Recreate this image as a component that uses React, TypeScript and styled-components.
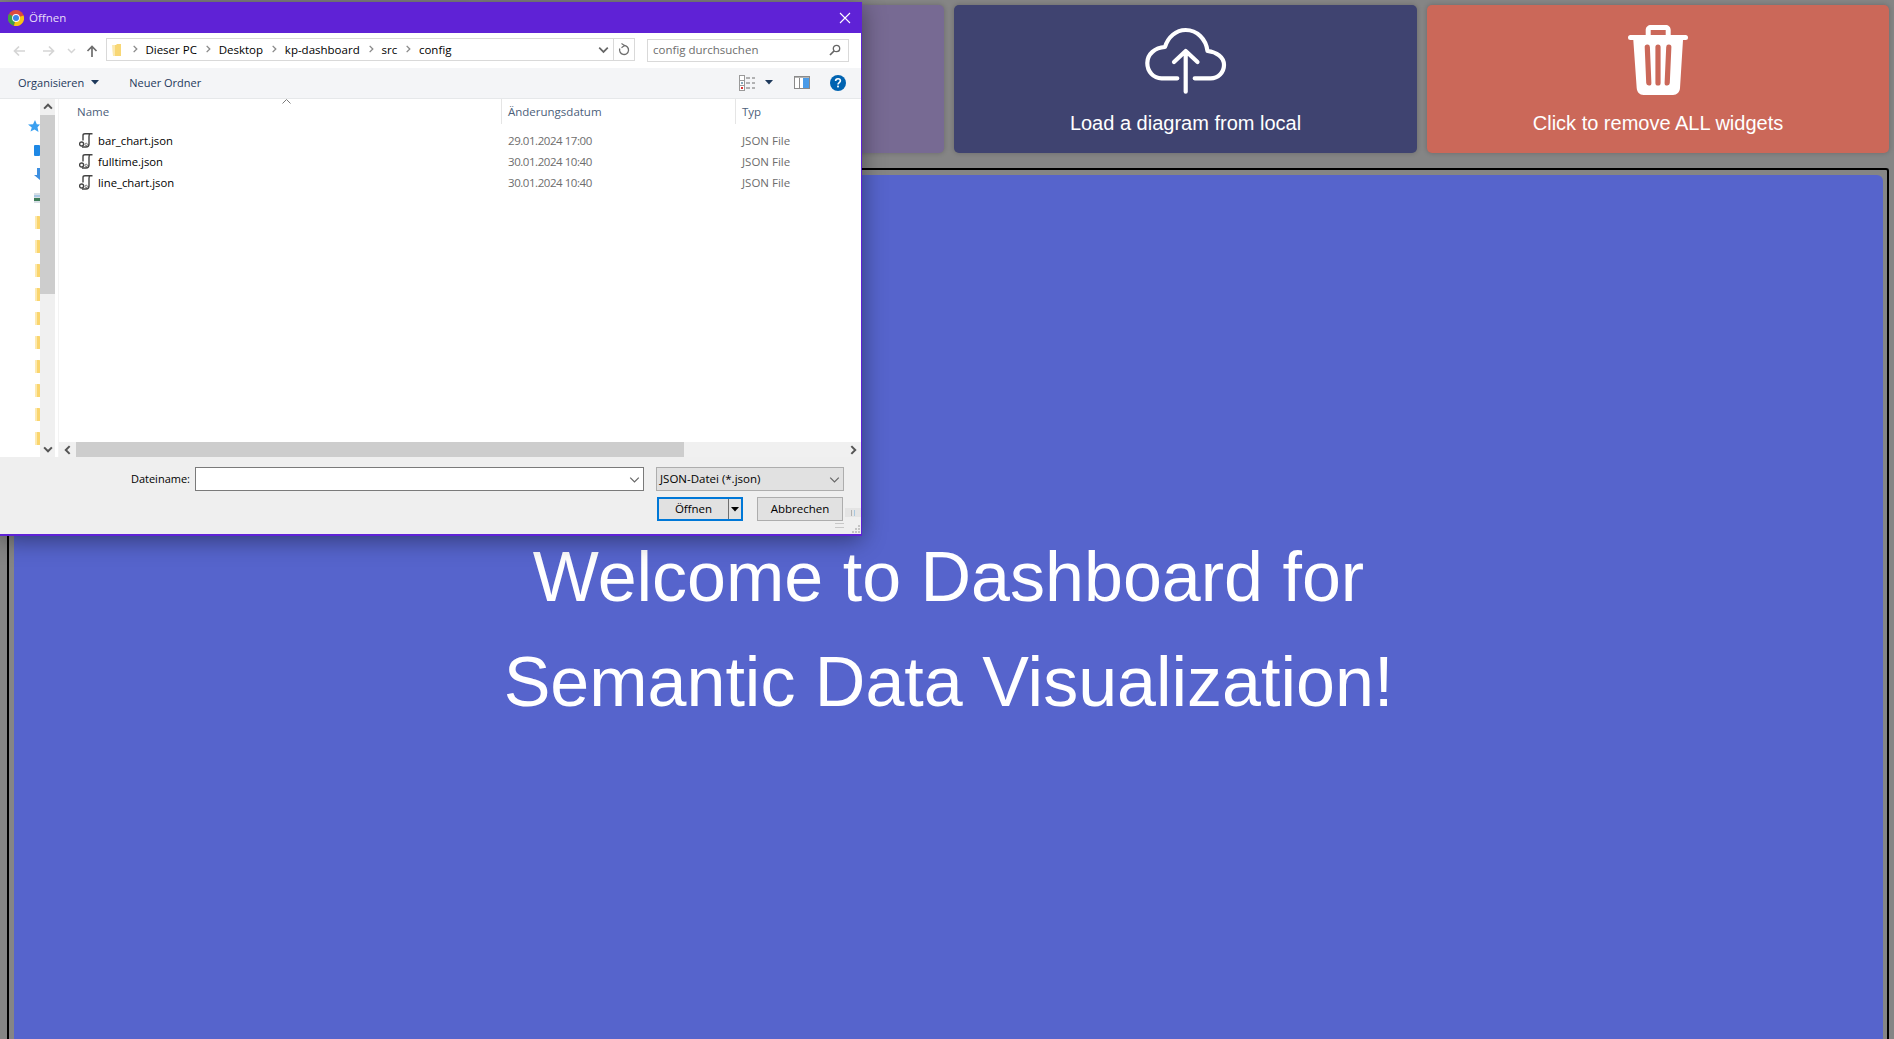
import React from "react";
import styled, { createGlobalStyle } from "styled-components";

const GlobalStyle = createGlobalStyle`
  html, body {
    margin: 0;
    height: 100%;
    overflow: hidden;
    background: #858585;
    font-family: "Liberation Sans", Arial, sans-serif;
  }
  * { box-sizing: border-box; }
`;

const Page = styled.div`
  position: relative;
  display: flex;
  flex-direction: column;
  height: 1039px;
  padding: 5px 5px 0 8px;
  overflow: hidden;
`;

const ActionGrid = styled.div`
  display: grid;
  grid-template-columns: 463px 463px 463px 1fr;
  gap: 10px;
  height: 148px;
  flex: none;
`;

const ActionCard = styled.div<{ $bg: string }>`
  display: flex;
  flex-direction: column;
  align-items: center;
  background: ${(p) => p.$bg};
  border-radius: 5px;
  box-shadow: 0 0 5px rgba(0, 0, 0, 0.22);
  color: #fff;
  font-size: 20px;
  line-height: 24px;
`;

const IconSlot = styled.div<{ $pad: number }>`
  height: 106px;
  display: flex;
  align-items: flex-end;
  padding-bottom: ${(p) => p.$pad}px;
`;

const Frame = styled.div`
  flex: 1;
  margin: 15px 0 0 -1px;
  border: 2px solid #000;
  border-bottom: none;
  border-radius: 3px 3px 0 0;
  padding: 5px 4px 0 5px;
  display: flex;
  min-height: 0;
`;

const WelcomePanel = styled.div`
  flex: 1;
  background: #5664cc;
  border-radius: 6px 6px 0 0;
  padding-top: 350px;
  text-align: center;
  color: #fff;
  font-size: 70px;
  line-height: 105px;
`;

/* the open-file dialog floats above the page */
const Dialog = styled.div`
  position: absolute;
  left: 0;
  top: 2px;
  width: 862px;
  height: 534px;
  display: flex;
  flex-direction: column;
  border: 1px solid #5f22d6;
  border-left: none;
  border-bottom-width: 2px;
  background: #fff;
  box-shadow: 0 4px 22px rgba(0, 0, 0, 0.42);
  font-family: "Open Sans", "Noto Sans", sans-serif;
  font-size: 11.5px;
  color: #000;
`;

const TitleBar = styled.div`
  flex: none;
  height: 30px;
  display: flex;
  align-items: center;
  gap: 5px;
  padding: 0 10px 0 8px;
  background: #5f22d6;
  color: #e8dcf8;
  font-size: 11.5px;
`;

const TitleText = styled.span`
  flex: 1;
  padding-bottom: 2px;
`;

const AddressRow = styled.div`
  flex: none;
  height: 35px;
  display: flex;
  align-items: center;
  padding: 0 12px 0 0;
  background: #fff;
`;

const NavButtons = styled.div`
  width: 106px;
  flex: none;
  display: flex;
  align-items: center;
  padding-left: 13px;
`;

const AddressBox = styled.div`
  width: 529px;
  height: 23px;
  flex: none;
  display: flex;
  align-items: center;
  border: 1px solid #d9d9d9;
  padding-left: 5px;
  margin-bottom: 2px;
`;

const Crumbs = styled.div`
  flex: 1;
  display: flex;
  align-items: center;
  gap: 6.9px;
  padding-left: 9.5px;
  padding-bottom: 1px;
`;

const AddressEnd = styled.div`
  width: 21px;
  height: 100%;
  display: flex;
  align-items: center;
  justify-content: center;
  border-left: 1px solid #d9d9d9;
`;

const SearchBox = styled.div`
  width: 202px;
  height: 23px;
  margin-left: 12px;
  display: flex;
  align-items: center;
  justify-content: space-between;
  padding: 0 7px 2px 5px;
  border: 1px solid #d9d9d9;
  color: #6d6d6d;
`;

const CommandBar = styled.div`
  flex: none;
  height: 31px;
  display: flex;
  align-items: center;
  background: #f4f5f7;
  border-bottom: 1px solid #e6e8ea;
  padding: 0 15px 0 18px;
  color: #1e395b;
  font-size: 11px;
`;

const CommandItem = styled.span<{ $gap?: number; $inner?: number }>`
  display: flex;
  align-items: center;
  gap: ${(p) => p.$inner ?? 7}px;
  margin-right: ${(p) => p.$gap ?? 0}px;
  padding-bottom: 1px;
`;

const Spacer = styled.div`
  flex: 1;
`;

const Body = styled.div`
  flex: 1;
  min-height: 0;
  display: flex;
`;

const NavTree = styled.div`
  width: 40px;
  flex: none;
  overflow: hidden;
  display: flex;
  flex-direction: column;
  padding-top: 15px;
`;

const NavRow = styled.div`
  height: 24px;
  flex: none;
  display: flex;
  align-items: center;
  justify-content: flex-end;
  overflow: hidden;
`;

const VScroll = styled.div`
  width: 15px;
  flex: none;
  background: #f0f0f0;
  display: flex;
  flex-direction: column;
`;

const ScrollButton = styled.div<{ $w?: number; $h?: number }>`
  flex: none;
  width: ${(p) => (p.$w ? `${p.$w}px` : "auto")};
  height: ${(p) => (p.$h ? `${p.$h}px` : "auto")};
  display: flex;
  align-items: center;
  justify-content: center;
`;

const VThumb = styled.div`
  height: 179px;
  flex: none;
  background: #cdcdcd;
`;

const Fill = styled.div`
  flex: 1;
`;

const ListPane = styled.div`
  flex: 1;
  min-width: 0;
  display: flex;
  flex-direction: column;
  margin-left: 3px;
  border-left: 1px solid #f3f3f3;
  position: relative;
`;

const ColumnHeader = styled.div`
  flex: none;
  height: 25px;
  display: grid;
  grid-template-columns: 442px 234px 1fr;
  color: #4c607a;
`;

const HeaderCell = styled.div<{ $first?: boolean }>`
  display: flex;
  align-items: center;
  padding-left: ${(p) => (p.$first ? 18 : 6)}px;
  border-left: ${(p) => (p.$first ? "none" : "1px solid #e5e5e5")};
`;

const SortCaret = styled.svg`
  position: absolute;
  left: 223px;
  top: 0;
`;

const FileList = styled.div`
  flex: 1;
  min-height: 0;
  padding-top: 6px;
`;

const FileRow = styled.div`
  height: 21px;
  display: grid;
  grid-template-columns: 442px 234px 1fr;
  align-items: center;
  color: #6d6d6d;
`;

const FileName = styled.div`
  display: flex;
  align-items: center;
  gap: 5px;
  padding-left: 20px;
  color: #000;
  font-size: 11.3px;
`;

const DateCell = styled.div`
  padding-left: 7px;
  letter-spacing: -0.45px;
`;

const FileCell = styled.div`
  padding-left: 7px;
`;

const HScroll = styled.div`
  flex: none;
  height: 15px;
  display: flex;
  background: #f0f0f0;
`;

const HThumb = styled.div`
  width: 608px;
  background: #cdcdcd;
`;

const Footer = styled.div`
  position: relative;
  flex: none;
  height: 77px;
  background: #efefef;
  padding: 10px 0 0 0;
  color: #000;
`;

const FieldRow = styled.div`
  display: flex;
  align-items: center;
  height: 24px;
`;

const FieldLabel = styled.label`
  width: 190px;
  text-align: right;
  font-size: 11px;
  padding-bottom: 2px;
`;

const NameInput = styled.div`
  width: 449px;
  height: 24px;
  margin-left: 5px;
  background: #fff;
  border: 1px solid #7a7a7a;
  display: flex;
  align-items: center;
  justify-content: flex-end;
  padding-right: 3px;
`;

const FilterSelect = styled.div`
  width: 188px;
  height: 24px;
  margin-left: 12px;
  background: #e1e1e1;
  border: 1px solid #adadad;
  display: flex;
  align-items: center;
  justify-content: space-between;
  padding: 0 3px 0 3px;
`;

const FilterText = styled.span`
  padding-bottom: 2px;
`;

const ButtonRow = styled.div`
  display: flex;
  height: 24px;
  margin-top: 6px;
  padding-left: 657px;
  gap: 14px;
`;

const OpenButton = styled.div`
  width: 86px;
  height: 24px;
  display: flex;
  align-items: center;
  background: #e1e1e1;
  border: 2px solid #0078d7;
`;

const OpenLabel = styled.span`
  width: 69px;
  text-align: center;
  padding-bottom: 2px;
`;

const SplitArrow = styled.span`
  flex: 1;
  height: 100%;
  display: flex;
  align-items: center;
  justify-content: center;
  border-left: 1px solid #6f6f6f;
`;

const CancelButton = styled.div`
  width: 86px;
  height: 24px;
  display: flex;
  align-items: center;
  justify-content: center;
  background: #e1e1e1;
  border: 1px solid #adadad;
  padding-bottom: 2px;
`;

const ResizeTab = styled.div`
  position: absolute;
  left: 845px;
  top: 51px;
  width: 16px;
  height: 9px;
  background: #e4e4e4;
  display: flex;
  justify-content: center;
  gap: 2px;
  padding-top: 2px;
`;

const ResizeTick = styled.span<{ $color: string }>`
  width: 1px;
  height: 6px;
  background: ${(p) => p.$color};
`;

const HandleLines = styled.div`
  position: absolute;
  left: 835px;
  top: 66px;
  width: 9px;
  height: 5px;
  border-top: 1px solid #c8c8c8;
  border-bottom: 1px solid #c8c8c8;
`;

const Grip = styled.svg`
  position: absolute;
  right: 1px;
  bottom: 1px;
`;

const ChromeIcon = () => (
  <svg width="16" height="16" viewBox="0 0 16 16">
    <circle cx="8" cy="8" r="8" fill="#dd4b3e" />
    <path d="M8 8 L1 4 A8 8 0 0 0 6 15.8 Z" fill="#3fa04a" />
    <path d="M8 8 L15.6 5.5 A8 8 0 0 1 6 15.8 Z" fill="#f5c518" />
    <circle cx="8" cy="8" r="3.9" fill="#fff" />
    <circle cx="8" cy="8" r="3" fill="#3d83e8" />
  </svg>
);

const CloseIcon = () => (
  <svg width="12" height="12" viewBox="0 0 12 12">
    <path d="M1 1 L11 11 M11 1 L1 11" stroke="#fff" strokeWidth="1.1" />
  </svg>
);

const NavArrow = ({ dir, color, gap }: { dir: "left" | "right" | "up"; color: string; gap: number }) => {
  const d = {
    left: "M12 6 H1.5 M6 1.5 L1.5 6 L6 10.5",
    right: "M0 6 H10.5 M6 1.5 L10.5 6 L6 10.5",
    up: "M6 12 V1.5 M1.5 6 L6 1.5 L10.5 6",
  }[dir];
  return (
    <svg width="12" height="12" viewBox="0 0 12 12" style={{ marginRight: gap }}>
      <path d={d} fill="none" stroke={color} strokeWidth="1.7" />
    </svg>
  );
};

const Chevron = ({ dir, color = "#666", size = 9, width = 1.5 }: { dir: "up" | "down" | "left" | "right"; color?: string; size?: number; width?: number }) => {
  const d = {
    up: "M1 6 L4.5 2.5 L8 6",
    down: "M1 3 L4.5 6.5 L8 3",
    left: "M6 1 L2.5 4.5 L6 8",
    right: "M3 1 L6.5 4.5 L3 8",
  }[dir];
  return (
    <svg width={size} height={size} viewBox="0 0 9 9">
      <path d={d} fill="none" stroke={color} strokeWidth={width} />
    </svg>
  );
};

const FolderBit = () => (
  <svg width="9" height="12" viewBox="0 0 9 12">
    <path d="M0.5 1 H4 L5 0 H9 V12 H1 Z" fill="#f8d775" />
    <path d="M0.5 1 H3 V12 H1 Z" fill="#fbe9b0" />
  </svg>
);

const CrumbSep = () => <Chevron dir="right" color="#8a8a8a" size={8} />;

const RefreshIcon = () => (
  <svg width="12" height="13" viewBox="0 0 12 13">
    <path d="M6 2.5 A4.5 4.5 0 1 1 1.8 5.5" fill="none" stroke="#6d6d6d" strokeWidth="1.3" />
    <path d="M3.5 0.5 L6.5 2.5 L3.5 4.8" fill="none" stroke="#6d6d6d" strokeWidth="1.1" />
  </svg>
);

const SearchIcon = () => (
  <svg width="12" height="12" viewBox="0 0 12 12">
    <circle cx="7.5" cy="4.5" r="3.2" fill="none" stroke="#666" strokeWidth="1.3" />
    <path d="M5 7 L1 11" stroke="#666" strokeWidth="1.7" />
  </svg>
);

const SmallCaret = ({ color = "#1e395b" }: { color?: string }) => (
  <svg width="8" height="5" viewBox="0 0 8 5">
    <path d="M0 0 H8 L4 4.5 Z" fill={color} />
  </svg>
);

const DetailsIcon = () => (
  <svg width="16" height="16" viewBox="0 0 16 16">
    <rect x="0.5" y="0.5" width="5" height="15" fill="#fff" stroke="#9a9a9a" />
    <path d="M0.5 5.5 H5.5 M0.5 10.5 H5.5" stroke="#9a9a9a" />
    <rect x="2" y="12" width="2" height="2" fill="#d33" />
    <rect x="2" y="7" width="2" height="2" fill="#8ab" />
    <path d="M7 3 H11 M13 3 H16 M7 8 H11 M13 8 H16 M7 13 H11 M13 13 H16" stroke="#6f6f6f" />
  </svg>
);

const PaneIcon = () => (
  <svg width="16" height="13" viewBox="0 0 16 13">
    <rect x="0.5" y="0.5" width="15" height="12" fill="#fff" stroke="#8a8a8a" />
    <rect x="9" y="2" width="6" height="10" fill="#4a9be8" />
    <path d="M5.5 1 V12" stroke="#8a8a8a" />
    <rect x="1" y="1" width="14" height="1" fill="#b5b5b5" />
  </svg>
);

const HelpIcon = () => (
  <svg width="16" height="16" viewBox="0 0 16 16">
    <circle cx="8" cy="8" r="8" fill="#0063b1" />
    <path d="M5.6 6 C5.6 4.4 6.8 3.7 8 3.7 C9.4 3.7 10.4 4.5 10.4 5.8 C10.4 7.6 8 7.6 8 9.6" fill="none" stroke="#fff" strokeWidth="1.6" />
    <rect x="7.1" y="10.6" width="1.8" height="1.8" fill="#fff" />
  </svg>
);

const ScriptIcon = () => (
  <svg width="14" height="15" viewBox="0 0 14 15">
    <path d="M4 7.5 V2.5 C4 1.3 5 0.8 6 0.8 H13.5 M11 0.8 C10 1.5 10 2.5 10 3.5 V11 C10 13 8.5 14 7 14 H3" fill="none" stroke="#444" strokeWidth="1.4" />
    <circle cx="2.6" cy="11" r="2" fill="#fff" stroke="#444" strokeWidth="1.4" />
    <circle cx="7.2" cy="11.4" r="1.2" fill="none" stroke="#777" strokeWidth="1" />
  </svg>
);

const NAV_ICONS = [
  <svg key="star" width="12" height="12" viewBox="0 0 12 12">
    <path d="M7 0 L8.8 4.2 L12 4.6 L9.5 7.2 L10.5 12 L6.5 9.6 L2.5 11.5 L3.8 7.4 L0 4.6 L5 4.2 Z" fill="#3aa0f0" />
  </svg>,
  <svg key="desk" width="6" height="11" viewBox="0 0 6 11">
    <rect width="6" height="11" rx="1" fill="#1e88e5" />
  </svg>,
  <svg key="down" width="6" height="12" viewBox="0 0 6 12">
    <path d="M3 0 H6 V12 L0 7 H3 Z" fill="#3d8fe0" />
  </svg>,
  <svg key="pic" width="6" height="10" viewBox="0 0 6 10">
    <rect width="6" height="10" fill="#d8dfe6" />
    <rect y="5" width="6" height="3" fill="#3e7d58" />
    <rect y="2" width="6" height="2" fill="#a9c8e4" />
  </svg>,
  ...Array.from({ length: 10 }, (_, i) => (
    <svg key={i} width="5" height="13" viewBox="0 0 5 13">
      <rect x="0.5" width="4.5" height="13" rx="0.5" fill="#fad56e" />
      <rect x="0.5" width="1.5" height="13" fill="#fde9ae" />
    </svg>
  )),
];

const FILES = [
  { name: "bar_chart.json", date: "29.01.2024 17:00" },
  { name: "fulltime.json", date: "30.01.2024 10:40" },
  { name: "line_chart.json", date: "30.01.2024 10:40" },
];

const OpenDialog = () => (
  <Dialog>
    <TitleBar>
      <ChromeIcon />
      <TitleText>Öffnen</TitleText>
      <CloseIcon />
    </TitleBar>
    <AddressRow>
      <NavButtons>
        <NavArrow dir="left" color="#d5d5d5" gap={18} />
        <NavArrow dir="right" color="#d5d5d5" gap={12} />
        <Chevron dir="down" color="#d5d5d5" size={9} />
        <span style={{ width: 10 }} />
        <NavArrow dir="up" color="#6d6d6d" gap={0} />
      </NavButtons>
      <AddressBox>
        <FolderBit />
        <Crumbs>
          <CrumbSep />
          <span>Dieser PC</span>
          <CrumbSep />
          <span>Desktop</span>
          <CrumbSep />
          <span>kp-dashboard</span>
          <CrumbSep />
          <span>src</span>
          <CrumbSep />
          <span>config</span>
        </Crumbs>
        <ScrollButton $w={20}>
          <Chevron dir="down" color="#666" size={11} width={1.4} />
        </ScrollButton>
        <AddressEnd>
          <RefreshIcon />
        </AddressEnd>
      </AddressBox>
      <SearchBox>
        <span>config durchsuchen</span>
        <SearchIcon />
      </SearchBox>
    </AddressRow>
    <CommandBar>
      <CommandItem $gap={30}>
        Organisieren
        <SmallCaret />
      </CommandItem>
      <CommandItem>Neuer Ordner</CommandItem>
      <Spacer />
      <CommandItem $gap={21} $inner={10}>
        <DetailsIcon />
        <SmallCaret />
      </CommandItem>
      <CommandItem $gap={20}>
        <PaneIcon />
      </CommandItem>
      <HelpIcon />
    </CommandBar>
    <Body>
      <NavTree>
        {NAV_ICONS.map((icon, i) => (
          <NavRow key={i}>{icon}</NavRow>
        ))}
      </NavTree>
      <VScroll>
        <ScrollButton $h={16}>
          <Chevron dir="up" color="#555" size={10} width={1.8} />
        </ScrollButton>
        <VThumb />
        <Fill />
        <ScrollButton $h={16}>
          <Chevron dir="down" color="#555" size={10} width={1.8} />
        </ScrollButton>
      </VScroll>
      <ListPane>
        <ColumnHeader>
          <HeaderCell $first>Name</HeaderCell>
          <HeaderCell>Änderungsdatum</HeaderCell>
          <HeaderCell>Typ</HeaderCell>
        </ColumnHeader>
        <SortCaret width="9" height="5" viewBox="0 0 9 5">
          <path d="M0.5 4.5 L4.5 0.5 L8.5 4.5" fill="none" stroke="#7a7a7a" />
        </SortCaret>
        <FileList>
          {FILES.map((file) => (
            <FileRow key={file.name}>
              <FileName>
                <ScriptIcon />
                {file.name}
              </FileName>
              <DateCell>{file.date}</DateCell>
              <FileCell>JSON File</FileCell>
            </FileRow>
          ))}
        </FileList>
        <HScroll>
          <ScrollButton $w={17}>
            <Chevron dir="left" color="#555" size={10} width={1.8} />
          </ScrollButton>
          <HThumb />
          <Fill />
          <ScrollButton $w={16}>
            <Chevron dir="right" color="#555" size={10} width={1.8} />
          </ScrollButton>
        </HScroll>
      </ListPane>
    </Body>
    <Footer>
      <FieldRow>
        <FieldLabel>Dateiname:</FieldLabel>
        <NameInput>
          <Chevron dir="down" color="#666" size={11} width={1} />
        </NameInput>
        <FilterSelect>
          <FilterText>JSON-Datei (*.json)</FilterText>
          <Chevron dir="down" color="#666" size={11} width={1} />
        </FilterSelect>
      </FieldRow>
      <ButtonRow>
        <OpenButton>
          <OpenLabel>Öffnen</OpenLabel>
          <SplitArrow>
            <SmallCaret color="#000" />
          </SplitArrow>
        </OpenButton>
        <CancelButton>Abbrechen</CancelButton>
      </ButtonRow>
      <ResizeTab>
        <ResizeTick $color="#b0b0b0" />
        <ResizeTick $color="#a8c8e0" />
      </ResizeTab>
      <HandleLines />
      <Grip width="8" height="8" viewBox="0 0 8 8">
        <path d="M6 0 h2 v2 h-2 z M3 3 h2 v2 h-2 z M6 3 h2 v2 h-2 z M0 6 h2 v2 h-2 z M3 6 h2 v2 h-2 z M6 6 h2 v2 h-2 z" fill="#c4c4c4" />
      </Grip>
    </Footer>
  </Dialog>
);

const CloudUpload = () => (
  <svg width="84" height="72" viewBox="0 0 84 72">
    <path
      d="M33.3 51.3 H17.5 C9.5 51.3 3.3 44.5 3.3 36 C3.3 27 11 20.5 21 20 C24 10 32 3 41.7 3 C53 3 62 12 63.5 24 C72.5 25 80 30 80 38 C80 45.5 74 51.3 66.7 51.3 H50.7 M41.7 64.7 V25 M30 35 L41.7 24 L53.5 35"
      fill="none"
      stroke="#fff"
      strokeWidth="4.2"
      strokeLinecap="round"
      strokeLinejoin="round"
    />
  </svg>
);

const TrashCan = ({ slot }: { slot: string }) => (
  <svg width="60" height="70" viewBox="0 0 60 70">
    <path d="M17.7 10 V5 C17.7 2 20 0 23 0 H37.5 C40.5 0 42.7 2 42.7 5 V10 H37.7 V5 H22.7 V10 Z" fill="#fff" />
    <rect x="0" y="10" width="60" height="5" rx="2.5" fill="#fff" />
    <path d="M5.3 15 H55 L52 63 C51.8 67 49 70 45 70 H15.5 C11.5 70 9 67 8.7 63 Z" fill="#fff" />
    <path d="M19.3 22 L20.8 58 M30 22 V58 M40.8 22 L39.2 58" stroke={slot} strokeWidth="5.2" strokeLinecap="round" />
  </svg>
);

const App = () => (
  <>
    <GlobalStyle />
    <Page>
      <ActionGrid>
        <ActionCard $bg="#776a93" />
        <ActionCard $bg="#776a93" />
        <ActionCard $bg="#3f4370">
          <IconSlot $pad={12}>
            <CloudUpload />
          </IconSlot>
          Load a diagram from local
        </ActionCard>
        <ActionCard $bg="#cb6859">
          <IconSlot $pad={16}>
            <TrashCan slot="#cb6859" />
          </IconSlot>
          Click to remove ALL widgets
        </ActionCard>
      </ActionGrid>
      <Frame>
        <WelcomePanel>
          Welcome to Dashboard for
          <br />
          Semantic Data Visualization!
        </WelcomePanel>
      </Frame>
      <OpenDialog />
    </Page>
  </>
);

export default App;
